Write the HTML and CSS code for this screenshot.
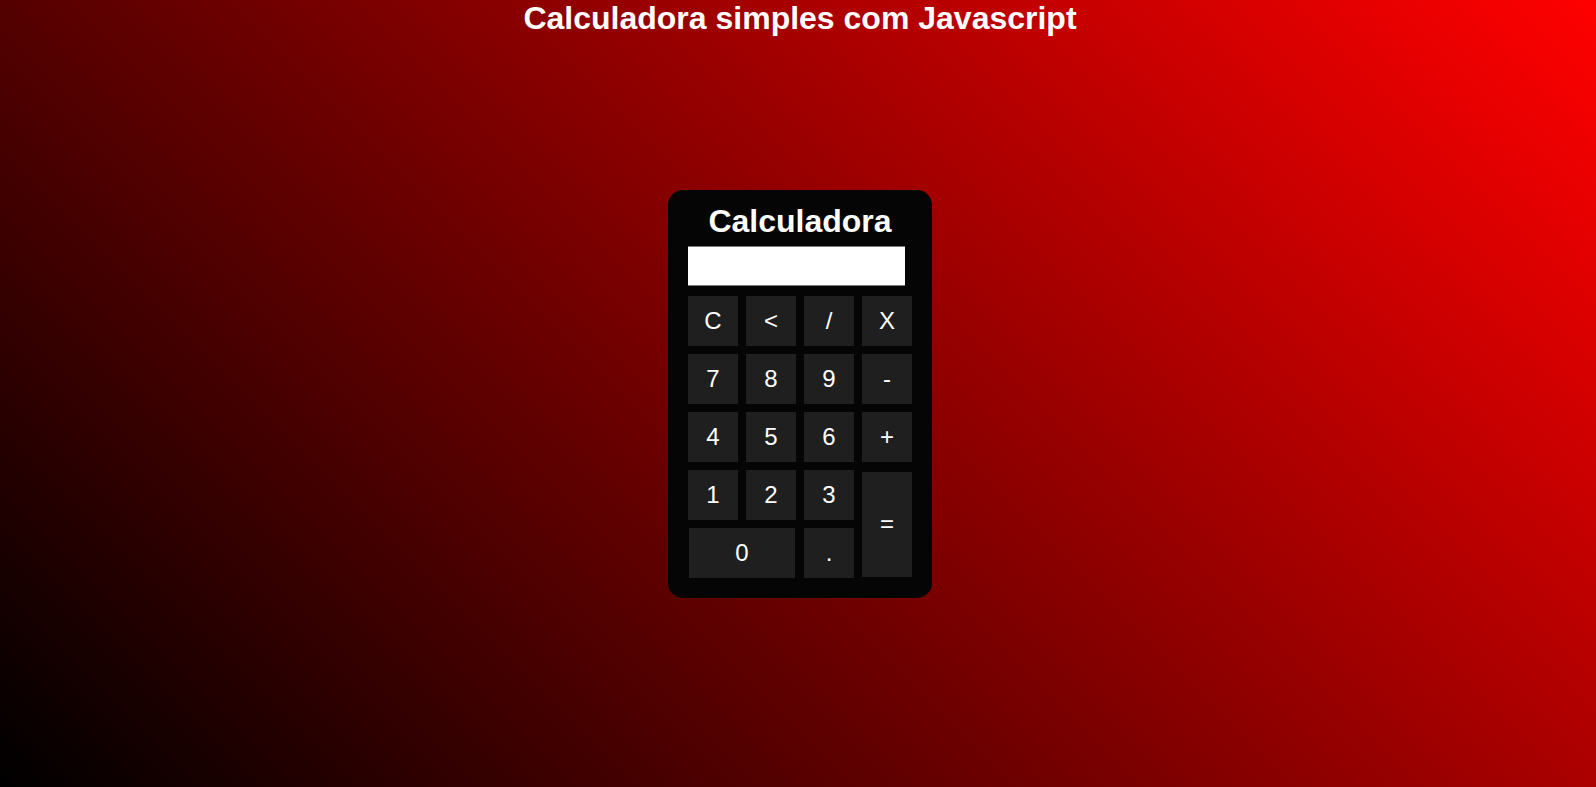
FILE: index.html
```html
<!DOCTYPE html>
<html lang="pt">
<head>
<meta charset="utf-8">
<title>Calculadora simples com Javascript</title>
<link rel="stylesheet" href="styles.css">
</head>
<body>
<div class="page">
  <h1 class="page-title">Calculadora simples com Javascript</h1>
  <div class="calc">
    <h2 class="calc-title">Calculadora</h2>
    <input class="display" type="text" value="">
    <div class="keys">
      <button class="key">C</button>
      <button class="key">&lt;</button>
      <button class="key">/</button>
      <button class="key">X</button>
      <button class="key">7</button>
      <button class="key">8</button>
      <button class="key">9</button>
      <button class="key">-</button>
      <button class="key">4</button>
      <button class="key">5</button>
      <button class="key">6</button>
      <button class="key">+</button>
      <button class="key">1</button>
      <button class="key">2</button>
      <button class="key">3</button>
      <button class="key key-equals">=</button>
      <button class="key key-zero">0</button>
      <button class="key">.</button>
    </div>
  </div>
</div>
</body>
</html>
```
FILE: styles.css
```css
html, body {
  margin: 0;
  padding: 0;
  height: 100%;
}
body {
  font-family: "Liberation Sans", Arial, sans-serif;
  background: linear-gradient(45deg, #000000, #ff0000);
  color: #fff;
  overflow: hidden;
}
.page {
  height: 100vh;
  display: grid;
  padding-left: 4px;
  box-sizing: border-box;
}
.page-title {
  grid-area: 1 / 1;
  align-self: start;
  justify-self: center;
  margin: 0;
  font-size: 32px;
  font-weight: bold;
  color: #fff;
}
.calc {
  grid-area: 1 / 1;
  align-self: center;
  justify-self: center;
  width: 264px;
  box-sizing: border-box;
  padding: 13px 20px 20px;
  background: #050505;
  border-radius: 15px;
  display: flex;
  flex-direction: column;
}
.calc-title {
  margin: 0 0 6px;
  font-size: 32px;
  line-height: 37px;
  font-weight: bold;
  text-align: center;
  color: #fff;
}
.display {
  width: 217px;
  height: 40px;
  box-sizing: border-box;
  margin: 0 0 10px;
  padding: 0;
  border: none;
  border-top: 1px solid #7a7a7a;
  border-bottom: 1px solid #7a7a7a;
  background: #fff;
  outline: none;
}
.keys {
  display: grid;
  grid-template-columns: repeat(4, 50px);
  grid-template-rows: repeat(5, 50px);
  gap: 8px;
}
.key {
  margin: 0;
  padding: 0;
  border: none;
  background: #1f1f1f;
  color: #fff;
  font-family: "Liberation Sans", Arial, sans-serif;
  font-size: 24px;
  width: 50px;
  height: 50px;
}
.key-equals {
  grid-column: 4;
  grid-row: 4 / span 2;
  height: 105px;
  margin-top: 2px;
}
.key-zero {
  grid-column: 1 / span 2;
  width: 106px;
  margin-left: 1px;
}
```
